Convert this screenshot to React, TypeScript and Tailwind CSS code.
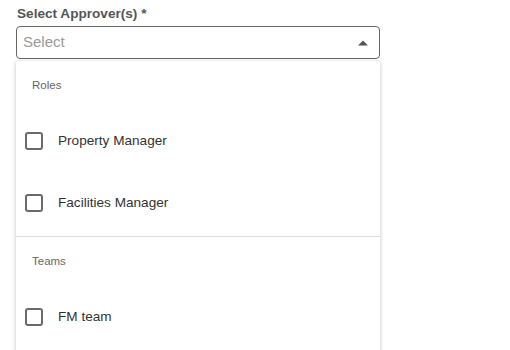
const GROUPS = [
  { title: 'Roles', items: ['Property Manager', 'Facilities Manager'] },
  { title: 'Teams', items: ['FM team'] },
];

function Checkbox() {
  return <span className="block w-[18px] h-[18px] rounded-[3px] border-2 border-[#6b6b6b] bg-white" />;
}

export default function App() {
  return (
    <div className="w-[510px] h-[350px] overflow-hidden bg-white font-['Liberation_Sans',Arial,sans-serif]">
      <div className="w-[364px] ml-4 pt-[6px]">
        <label className="block text-[13.6px] font-bold text-[#555] leading-[16px] mb-[4px] ml-px">
          Select Approver(s) *
        </label>
        <div className="h-[33px] rounded-[4px] border border-[#666] flex items-center pl-[6px] pr-[11px]">
          <span className="flex-1 text-[15px] text-[#9a9a9a]">Select</span>
          <svg width="10" height="6" viewBox="0 0 10 6">
            <path d="M0 5.5 L5 0.5 L10 5.5 Z" fill="#555" />
          </svg>
        </div>
        <div className="mt-[2px] bg-white shadow-[0_1px_4px_rgba(0,0,0,0.25)] rounded-t-[2px]">
          {GROUPS.map((g, gi) => (
            <div key={g.title} className={gi > 0 ? 'border-t border-[#dedede] pb-4' : 'pb-[2px]'}>
              <div className="h-[49px] flex items-center pl-4 text-[11.5px] text-[#666]">{g.title}</div>
              {g.items.map((item) => (
                <div key={item} className="h-[62px] flex items-center pl-[9px] gap-[15px]">
                  <Checkbox />
                  <span className="text-[13.6px] text-[#333]">{item}</span>
                </div>
              ))}
            </div>
          ))}
        </div>
      </div>
    </div>
  );
}
